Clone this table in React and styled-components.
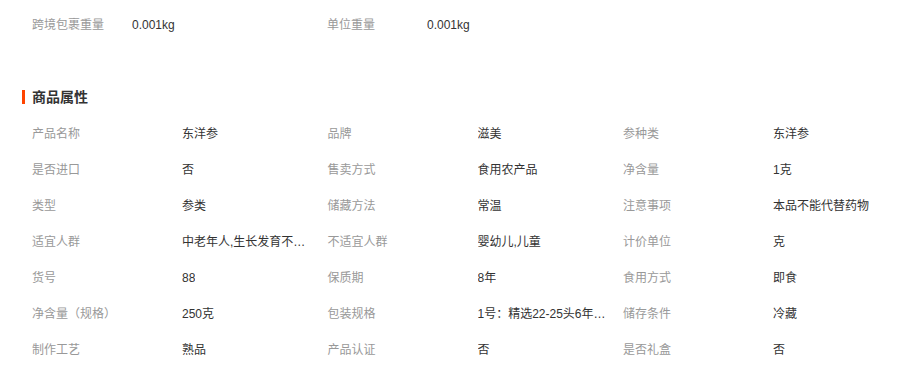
import styled, { createGlobalStyle } from 'styled-components';

const GlobalStyle = createGlobalStyle`
  body {
    margin: 0;
    background: #fff;
    font-family: "Liberation Sans", Arial, "Noto Sans CJK SC", sans-serif;
    font-size: 12px;
    line-height: 16px;
  }
`;

const Page = styled.div`
  width: 910px;
  padding: 7px 0 0 0;
`;

const WeightRow = styled.div`
  display: flex;
  padding-left: 32px;
  height: 36px;
  align-items: center;
`;

const WeightPair = styled.div`
  display: flex;
  width: 295px;
`;

const WeightLabel = styled.span`
  width: 100px;
  color: #999;
`;

const Value = styled.span`
  display: block;
  color: #333;
  max-width: ${({ $max }) => $max || 'none'};
  overflow: hidden;
  white-space: nowrap;
  text-overflow: ellipsis;
`;

const Title = styled.h3`
  display: flex;
  align-items: center;
  margin: 44px 0 9px 22px;
  height: 20px;
  font-size: 14px;
  font-weight: bold;
  color: #333;

  &::before {
    content: '';
    width: 3px;
    height: 14px;
    background: #ff4400;
    margin-right: 7px;
  }
`;

const AttrGrid = styled.div`
  display: grid;
  grid-template-columns: repeat(3, 295.5px);
  grid-auto-rows: 36px;
  padding-left: 32px;
`;

const Attr = styled.div`
  display: flex;
  align-items: center;
`;

const AttrLabel = styled.span`
  width: 150px;
  flex-shrink: 0;
  color: #999;
`;

const attrs = [
  ['产品名称', '东洋参'],
  ['品牌', '滋美'],
  ['参种类', '东洋参'],
  ['是否进口', '否'],
  ['售卖方式', '食用农产品'],
  ['净含量', '1克'],
  ['类型', '参类'],
  ['储藏方法', '常温'],
  ['注意事项', '本品不能代替药物'],
  ['适宜人群', '中老年人,生长发育不良者,体虚者'],
  ['不适宜人群', '婴幼儿,儿童'],
  ['计价单位', '克'],
  ['货号', '88'],
  ['保质期', '8年'],
  ['食用方式', '即食'],
  ['净含量（规格）', '250克'],
  ['包装规格', '1号：精选22-25头6年根东洋参'],
  ['储存条件', '冷藏'],
  ['制作工艺', '熟品'],
  ['产品认证', '否'],
  ['是否礼盒', '否'],
];

export default function App() {
  return (
    <Page>
      <GlobalStyle />
      <WeightRow>
        <WeightPair>
          <WeightLabel>跨境包裹重量</WeightLabel>
          <Value>0.001kg</Value>
        </WeightPair>
        <WeightPair>
          <WeightLabel>单位重量</WeightLabel>
          <Value>0.001kg</Value>
        </WeightPair>
      </WeightRow>
      <Title>商品属性</Title>
      <AttrGrid>
        {attrs.map(([label, value], i) => (
          <Attr key={i}>
            <AttrLabel>{label}</AttrLabel>
            <Value $max="130px">{value}</Value>
          </Attr>
        ))}
      </AttrGrid>
    </Page>
  );
}
